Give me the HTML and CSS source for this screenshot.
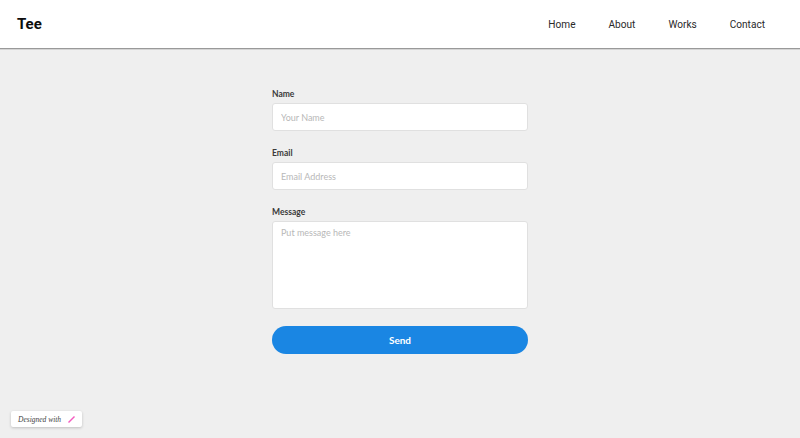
FILE: index.html
```html
<!DOCTYPE html>
<html lang="en">
<head>
<meta charset="utf-8">
<title>Tee</title>
<link rel="stylesheet" href="styles.css">
</head>
<body>
<header class="topbar">
  <div class="brand">Tee</div>
  <nav class="nav">
    <a href="#">Home</a>
    <a href="#">About</a>
    <a href="#">Works</a>
    <a href="#">Contact</a>
  </nav>
</header>
<main class="main">
  <form class="form">
    <div class="field">
      <label for="n">Name</label>
      <input id="n" type="text" placeholder="Your Name">
    </div>
    <div class="field">
      <label for="e">Email</label>
      <input id="e" type="text" placeholder="Email Address">
    </div>
    <div class="field">
      <label for="m">Message</label>
      <textarea id="m" placeholder="Put message here"></textarea>
    </div>
    <button class="send" type="button">Send</button>
  </form>
</main>
<div class="badge">
  <span class="badge-text">Designed with</span>
  <svg class="badge-icon" width="7" height="7" viewBox="0 0 7 7"><path d="M0.5 6.5L6.5 0.5" stroke="#f45cc0" stroke-width="1.4" fill="none"/></svg>
</div>
</body>
</html>
```

FILE: styles.css
```css
* { box-sizing: border-box; }
html, body { margin: 0; height: 100%; }
body { background: #efefef; font-family: Lato, sans-serif; overflow: hidden; }
.topbar {
  height: 49px;
  background: #fff;
  border-bottom: 1px solid #999;
  box-shadow: 0 1px 0 #d4d4d4;
  display: flex;
  align-items: center;
  justify-content: space-between;
  padding: 0 35px 0 17px;
  font-family: Roboto, sans-serif;
}
.brand { font-size: 15px; font-weight: 700; color: #0d0d0d; }
.nav { display: flex; gap: 33px; }
.nav a { font-size: 10.1px; color: #2a2a2a; text-decoration: none; }
.main { display: flex; justify-content: center; padding-top: 40px; }
.form { width: 256px; display: flex; flex-direction: column; }
.field { display: flex; flex-direction: column; margin-bottom: 17px; }
label { font-size: 8.5px; font-weight: 700; color: #3a3a3a; line-height: 10px; margin-bottom: 4px; }
input, textarea {
  display: block;
  width: 100%;
  height: 28px;
  border: 1px solid #e0e0e0;
  border-radius: 3px;
  background: #fff;
  padding: 0 8px;
  font: 9px Lato, sans-serif;
  color: #333;
  outline: none;
}
textarea { height: 88px; padding: 5px 8px; resize: none; }
::placeholder { color: #b8b8b8; opacity: 1; }
.send {
  height: 28px;
  border: 0;
  border-radius: 14px;
  background: #1a86e3;
  color: #fff;
  font: 700 10px Lato, sans-serif;
}
.badge {
  position: absolute;
  left: 11px;
  top: 411px;
  width: 71px;
  height: 16px;
  background: #fff;
  border-radius: 2px;
  box-shadow: 0 1px 3px rgba(0,0,0,.2);
  display: flex;
  align-items: center;
  justify-content: space-between;
  padding: 0 7px;
}
.badge-text { font: italic 7.5px "Liberation Serif", serif; color: #444; white-space: nowrap; }
```
